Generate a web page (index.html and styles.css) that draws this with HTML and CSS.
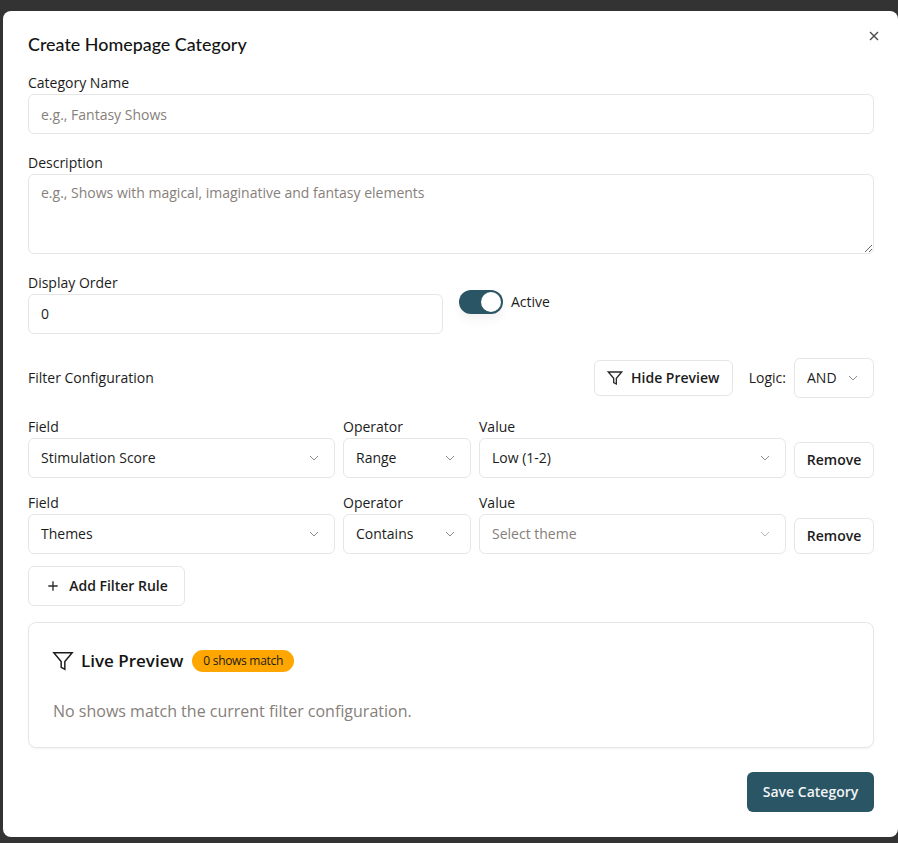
FILE: index.html
```html
<!DOCTYPE html>
<html lang="en">
<head>
    <meta charset="UTF-8">
    <meta name="viewport" content="width=device-width, initial-scale=1.0">
    <title>Create Homepage Category</title>
    <link rel="stylesheet" href="styles.css">
</head>
<body>
    <svg class="icon-defs" width="0" height="0">
        <symbol id="chevron" viewBox="0 0 24 24"><path d="M6 9l6 6 6-6"/></symbol>
        <symbol id="funnel" viewBox="0 0 24 24"><path d="M22 3H2l8 9.46V19l4 2v-8.54z"/></symbol>
    </svg>

    <div class="modal">
        <button class="close" aria-label="Close">
            <svg viewBox="0 0 24 24"><path d="M6 6l12 12M18 6L6 18"/></svg>
        </button>

        <h2 class="modal-title">Create Homepage Category</h2>

        <div class="field">
            <label>Category Name</label>
            <input class="input" type="text" placeholder="e.g., Fantasy Shows">
        </div>

        <div class="field">
            <label>Description</label>
            <textarea class="input textarea" placeholder="e.g., Shows with magical, imaginative and fantasy elements"></textarea>
        </div>

        <div class="order-row">
            <div class="field order-field">
                <label>Display Order</label>
                <input class="input input-number" type="text" value="0">
            </div>
            <div class="switch-wrap">
                <span class="switch"><span class="switch-thumb"></span></span>
                <span class="switch-label">Active</span>
            </div>
        </div>

        <div class="filter-head">
            <span class="filter-title">Filter Configuration</span>
            <button class="btn btn-preview"><svg class="btn-icon"><use href="#funnel"/></svg>Hide Preview</button>
            <span class="logic-label">Logic:</span>
            <div class="select select-logic">AND<svg class="chevron"><use href="#chevron"/></svg></div>
        </div>

        <div class="rule">
            <div><label>Field</label><div class="select">Stimulation Score<svg class="chevron"><use href="#chevron"/></svg></div></div>
            <div><label>Operator</label><div class="select">Range<svg class="chevron"><use href="#chevron"/></svg></div></div>
            <div><label>Value</label><div class="select">Low (1-2)<svg class="chevron"><use href="#chevron"/></svg></div></div>
            <button class="btn btn-remove">Remove</button>
        </div>

        <div class="rule">
            <div><label>Field</label><div class="select">Themes<svg class="chevron"><use href="#chevron"/></svg></div></div>
            <div><label>Operator</label><div class="select">Contains<svg class="chevron"><use href="#chevron"/></svg></div></div>
            <div><label>Value</label><div class="select select-empty">Select theme<svg class="chevron"><use href="#chevron"/></svg></div></div>
            <button class="btn btn-remove">Remove</button>
        </div>

        <button class="btn btn-add">
            <svg class="btn-icon" viewBox="0 0 24 24"><path d="M12 5v14M5 12h14"/></svg>Add Filter Rule
        </button>

        <div class="preview-card">
            <div class="preview-head">
                <svg class="preview-icon"><use href="#funnel"/></svg>
                <span class="preview-title">Live Preview</span>
                <span class="badge">0 shows match</span>
            </div>
            <p class="preview-empty">No shows match the current filter configuration.</p>
        </div>

        <div class="modal-actions">
            <button class="btn-save">Save Category</button>
        </div>
    </div>
</body>
</html>
```

FILE: styles.css
```css
* {
    box-sizing: border-box;
}
body {
    margin: 0;
    height: 843px;
    overflow: hidden;
    background-color: #333333;
    font-family: "Open Sans", "Noto Sans", sans-serif;
    font-size: 14px;
    line-height: 20px;
    color: #1c1c1c;
}
button {
    font-family: inherit;
    line-height: 20px;
    cursor: pointer;
}
label {
    display: block;
    height: 20px;
    margin-bottom: 1px;
    line-height: 20px;
    font-size: 14px;
}
.icon-defs {
    position: absolute;
}
.modal {
    position: relative;
    width: 895px;
    height: 826px;
    margin: 11px 0 0 3px;
    padding: 21px 24px 25px 25px;
    background-color: #fff;
    border-radius: 8px;
}
.close {
    position: absolute;
    top: 17px;
    right: 16px;
    width: 16px;
    height: 16px;
    padding: 0;
    border: none;
    background: none;
}
.close svg {
    display: block;
    width: 16px;
    height: 16px;
    fill: none;
    stroke: #4a4a4a;
    stroke-width: 2;
}
.modal-title {
    height: 24px;
    margin: 0 0 17px;
    line-height: 24px;
    font-family: Lato, "Noto Sans", sans-serif;
    font-size: 17.9px;
    font-weight: 500;
    color: #141414;
}
.field {
    margin-bottom: 19px;
}
.input {
    display: block;
    width: 100%;
    height: 40px;
    padding: 0 12px;
    border: 1px solid #e6e6e6;
    border-radius: 6px;
    background: #fff;
    outline: none;
    font-family: inherit;
    font-size: 14px;
    line-height: 20px;
    color: #1c1c1c;
}
.input::placeholder {
    color: #86807b;
    opacity: 1;
}
.input-number {
    padding-bottom: 2px;
}
.textarea {
    height: 80px;
    padding: 8px 12px;
}
.order-row {
    display: flex;
    gap: 16px;
    margin-bottom: 24px;
}
.order-field {
    width: 415px;
    margin-bottom: 0;
}
.switch-wrap {
    display: flex;
    align-items: center;
    gap: 8px;
    height: 24px;
    margin-top: 17px;
}
.switch {
    display: flex;
    justify-content: flex-end;
    align-items: center;
    width: 44px;
    height: 24px;
    padding: 2px;
    border-radius: 12px;
    background-color: #2a5565;
    box-shadow: 0 6px 10px rgba(0, 0, 0, 0.05);
}
.switch-thumb {
    width: 20px;
    height: 20px;
    border-radius: 50%;
    background-color: #fff;
}
.filter-head {
    display: flex;
    align-items: center;
    margin-bottom: 19px;
}
.filter-title {
    flex: 1;
}
.btn {
    display: inline-flex;
    align-items: center;
    justify-content: center;
    border: 1px solid #e6e6e6;
    border-radius: 6px;
    background-color: #fff;
    font-size: 14px;
    font-weight: 600;
    color: #1c1c1c;
}
.btn-icon {
    width: 16px;
    height: 16px;
    fill: none;
    stroke: #2b2b2b;
    stroke-width: 2;
}
.btn-preview {
    gap: 8px;
    width: 139px;
    height: 36px;
    margin-right: 16px;
}
.logic-label {
    margin-right: 8px;
}
.select {
    display: flex;
    align-items: center;
    justify-content: space-between;
    height: 40px;
    padding: 0 12px;
    border: 1px solid #e6e6e6;
    border-radius: 6px;
    background-color: #fff;
}
.select-logic {
    width: 80px;
}
.select-empty {
    color: #86807b;
}
.chevron {
    width: 16px;
    height: 16px;
    fill: none;
    stroke: #8c8c8c;
    stroke-width: 1.5;
}
.select-empty .chevron {
    stroke: #b5b5b5;
}
.rule {
    display: grid;
    grid-template-columns: 307px 128px 307px 80px;
    gap: 8px;
    align-items: end;
    width: 846px;
    margin-bottom: 15px;
}
.btn-remove {
    height: 36px;
    padding: 0;
}
.btn-add {
    gap: 8px;
    width: 157px;
    height: 40px;
    margin: -3px 0 16px;
}
.preview-card {
    width: 846px;
    height: 126px;
    padding: 24px;
    border: 1px solid #e6e6e6;
    border-radius: 8px;
    box-shadow: 0 1px 2px rgba(0, 0, 0, 0.05);
}
.preview-head {
    display: flex;
    align-items: center;
    height: 28px;
}
.preview-icon {
    width: 22px;
    height: 22px;
    margin-left: -1px;
    margin-right: 7px;
    fill: none;
    stroke: #1c1c1c;
    stroke-width: 1.6;
}
.preview-title {
    margin-right: 9px;
    font-size: 17px;
    font-weight: 600;
    color: #141414;
}
.badge {
    display: inline-flex;
    align-items: center;
    height: 22px;
    padding: 0 11px;
    border-radius: 11px;
    background-color: #ffa600;
    font-size: 12px;
    font-weight: 500;
    letter-spacing: -0.3px;
    color: #1c1c1c;
}
.preview-empty {
    margin: 25px 0 0;
    line-height: 22px;
    font-size: 16px;
    color: #86807b;
}
.modal-actions {
    display: flex;
    justify-content: flex-end;
    margin-top: 24px;
}
.btn-save {
    width: 127px;
    height: 40px;
    border: none;
    border-radius: 6px;
    background-color: #2a5565;
    font-size: 14px;
    font-weight: 600;
    color: #f2f4f5;
}
```
